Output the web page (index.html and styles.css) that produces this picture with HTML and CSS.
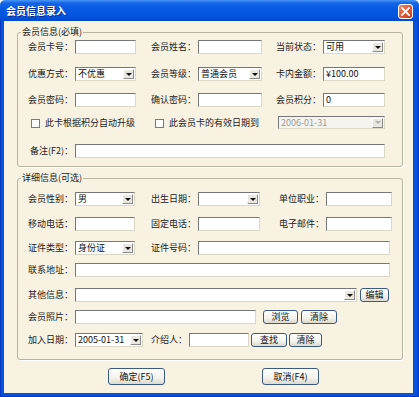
FILE: index.html
```html
<!DOCTYPE html>
<html lang="zh-CN">
<head>
  <meta charset="UTF-8" />
  <title>会员信息录入</title>
  <link rel="stylesheet" href="styles.css">
</head>
<body>
  <div class="window">
    <div class="titlebar">
      <span class="title">会员信息录入</span>
      <span class="close">
        <svg width="9" height="9" viewBox="0 0 9 9"><path d="M1 1L8 8M8 1L1 8" stroke="#fff" stroke-width="1.8" stroke-linecap="square"/></svg>
      </span>
    </div>
    <div class="frame">
      <div class="client">
        <fieldset class="group g1">
          <legend>会员信息(必填)</legend>
          <div class="grid grid1">
            <span class="lab">会员卡号：</span><span class="box"></span>
            <span class="lab">会员姓名：</span><span class="box"></span>
            <span class="lab">当前状态：</span><span class="box sel"><span class="val">可用</span><i class="arr"></i></span>

            <span class="lab">优惠方式：</span><span class="box sel"><span class="val">不优惠</span><i class="arr"></i></span>
            <span class="lab">会员等级：</span><span class="box sel"><span class="val">普通会员</span><i class="arr"></i></span>
            <span class="lab">卡内金额：</span><span class="box"><span class="val">¥100.00</span></span>

            <span class="lab">会员密码：</span><span class="box"></span>
            <span class="lab">确认密码：</span><span class="box"></span>
            <span class="lab">会员积分：</span><span class="box"><span class="val">0</span></span>

            <span class="check c1"><i class="chk"></i>此卡根据积分自动升级</span>
            <span class="check c2"><i class="chk"></i>此会员卡的有效日期到</span>
            <span class="box sel off expire"><span class="val">2006-01-31</span><i class="arr"></i></span>

            <span class="lab">备注(F2)：</span><span class="box wide"></span>
          </div>
        </fieldset>

        <fieldset class="group g2">
          <legend>详细信息(可选)</legend>
          <div class="grid grid2">
            <span class="lab">会员性别：</span><span class="box sel"><span class="val">男</span><i class="arr"></i></span>
            <span class="lab">出生日期：</span><span class="box sel"><span class="val"></span><i class="arr"></i></span>
            <span class="lab">单位职业：</span><span class="box"></span>

            <span class="lab">移动电话：</span><span class="box"></span>
            <span class="lab">固定电话：</span><span class="box"></span>
            <span class="lab">电子邮件：</span><span class="box"></span>

            <span class="lab">证件类型：</span><span class="box sel"><span class="val">身份证</span><i class="arr"></i></span>
            <span class="lab">证件号码：</span><span class="box span3"></span>

            <span class="lab">联系地址：</span><span class="box wide"></span>

            <span class="lab">其他信息：</span>
            <div class="line">
              <span class="box sel other"><span class="val"></span><i class="arr"></i></span>
              <span class="btn small edit">编辑</span>
            </div>

            <span class="lab">会员照片：</span>
            <div class="line">
              <span class="box photo"></span>
              <span class="btn small browse">浏览</span>
              <span class="btn small clear1">清除</span>
            </div>

            <span class="lab">加入日期：</span>
            <div class="line">
              <span class="box sel joined"><span class="val">2005-01-31</span><i class="arr"></i></span>
              <span class="lab intro">介绍人：</span>
              <span class="box referrer"></span>
              <span class="btn small find">查找</span>
              <span class="btn small clear2">清除</span>
            </div>
          </div>
        </fieldset>

        <div class="actions">
          <span class="btn big">确定(F5)</span>
          <span class="btn big">取消(F4)</span>
        </div>
      </div>
    </div>
  </div>
</body>
</html>
```

FILE: styles.css
```css
* {
  box-sizing: border-box;
}

body {
  margin: 0;
  font-family: "Noto Sans CJK SC", "DejaVu Sans", sans-serif;
  font-size: 9px;
  color: #222;
}

.window {
  width: 419px;
  height: 397px;
  display: flex;
  flex-direction: column;
}

.titlebar {
  height: 21px;
  flex: none;
  display: flex;
  align-items: center;
  justify-content: space-between;
  padding: 0 6px 0 6px;
  background: linear-gradient(#4a96f6 0, #1565e8 3px, #0558e2 45%, #0453dc 85%, #0347c8 100%);
  border-radius: 5px 5px 0 0;
}

.title {
  color: #fff;
  font-size: 10px;
  font-weight: bold;
  line-height: 12px;
  text-shadow: 1px 1px 0 #0b2a8a;
}

.close {
  width: 15px;
  height: 15px;
  margin-top: 1px;
  border: 1px solid #fff;
  border-radius: 3px;
  background: linear-gradient(135deg, #f08a6a 0, #e0552e 55%, #c2401c 100%);
  display: flex;
  align-items: center;
  justify-content: center;
}

.frame {
  flex: 1;
  background: #0651de;
  border-left: 1px solid #0a38c2;
  border-right: 1px solid #0a38c2;
  border-bottom: 1px solid #0a38c2;
  padding: 0 5px 3px 3px;
  display: flex;
}

.client {
  flex: 1;
  background: #f7f2e2;
  padding-left: 13px;
}

.group {
  width: 386px;
  margin: 5px 0 0 0;
  padding: 2px 0 8px 0;
  border: 1px solid #b8b4a3;
  border-radius: 3px;
  box-shadow: 1px 1px 0 #fff;
  min-inline-size: 0;
}

.group legend {
  margin-left: 3px;
  padding: 0 1px;
  line-height: 12px;
  height: 12px;
}

.g2 {
  padding-top: 8px;
  padding-bottom: 12px;
}

.grid {
  display: grid;
  align-items: start;
}

.grid1 {
  grid-template-columns: 57px 61px 62px 64px 61px 62px;
  grid-template-rows: 27px 26px 23px 28px 14px;
}

.grid2 {
  grid-template-columns: 57px 60px 63px 62px 66px 66px;
  grid-template-rows: 25px 24px 22px 25px 22px 23px 14px;
}

.lab {
  height: 14px;
  line-height: 14px;
  text-align: right;
  padding-right: 2px;
  white-space: nowrap;
}

.box {
  height: 14px;
  background: #fff;
  border: 1px solid;
  border-color: #777 #dcd8c8 #dcd8c8 #777;
  display: flex;
  align-items: center;
  overflow: hidden;
}

.val {
  flex: 1;
  padding-left: 2px;
  line-height: 12px;
  white-space: nowrap;
  color: #111;
}

.arr {
  width: 11px;
  height: 10px;
  margin-right: 1px;
  flex: none;
  background: #e9e7df;
  border: 1px solid;
  border-color: #fff #8a8a8a #8a8a8a #fff;
  display: flex;
  align-items: center;
  justify-content: center;
}

.arr::after {
  content: "";
  border-top: 3px solid #111;
  border-left: 3px solid transparent;
  border-right: 3px solid transparent;
}

.off {
  background: #f5f4ef;
}

.off .val {
  color: #9c9c9c;
}

.off .arr::after {
  border-top-color: #b0b0b0;
}

.check {
  height: 14px;
  line-height: 14px;
  display: flex;
  align-items: center;
  white-space: nowrap;
}

.c1 {
  grid-column: 1 / 3;
  padding-left: 13px;
}

.c2 {
  grid-column: 3 / 5;
  padding-left: 19px;
}

.chk {
  width: 9px;
  height: 9px;
  margin-right: 5px;
  background: #fff;
  border: 1px solid #7a7a7a;
  flex: none;
}

.expire {
  grid-column: 5 / 7;
  margin-left: 16px;
  height: 13px;
}

.wide {
  grid-column: 2 / 7;
}

.grid2 .wide,
.span3 {
  margin-right: 2px;
}

.span3 {
  grid-column: 4 / 7;
}

.line {
  grid-column: 2 / 7;
  display: flex;
  align-items: center;
}

.other {
  width: 282px;
}

.photo {
  width: 181px;
}

.joined {
  width: 68px;
}

.intro {
  width: 46px;
}

.referrer {
  width: 60px;
}

.btn {
  display: flex;
  align-items: center;
  justify-content: center;
  border: 1px solid #3b5a82;
  border-radius: 3px;
  background: linear-gradient(#ffffff 0, #f3f2ec 60%, #dcd9cc 100%);
  white-space: nowrap;
  color: #111;
}

.small {
  height: 14px;
  line-height: 12px;
}

.edit {
  width: 29px;
  margin-left: 3px;
}

.browse {
  width: 35px;
  margin-left: 7px;
}

.clear1 {
  width: 36px;
  margin-left: 3px;
}

.find {
  width: 36px;
  margin-left: 2px;
}

.clear2 {
  width: 33px;
  margin-left: 2px;
}

.actions {
  display: flex;
  gap: 97px;
  margin-top: 8px;
  padding-left: 91px;
}

.big {
  width: 57px;
  height: 17px;
  line-height: 15px;
}
```
